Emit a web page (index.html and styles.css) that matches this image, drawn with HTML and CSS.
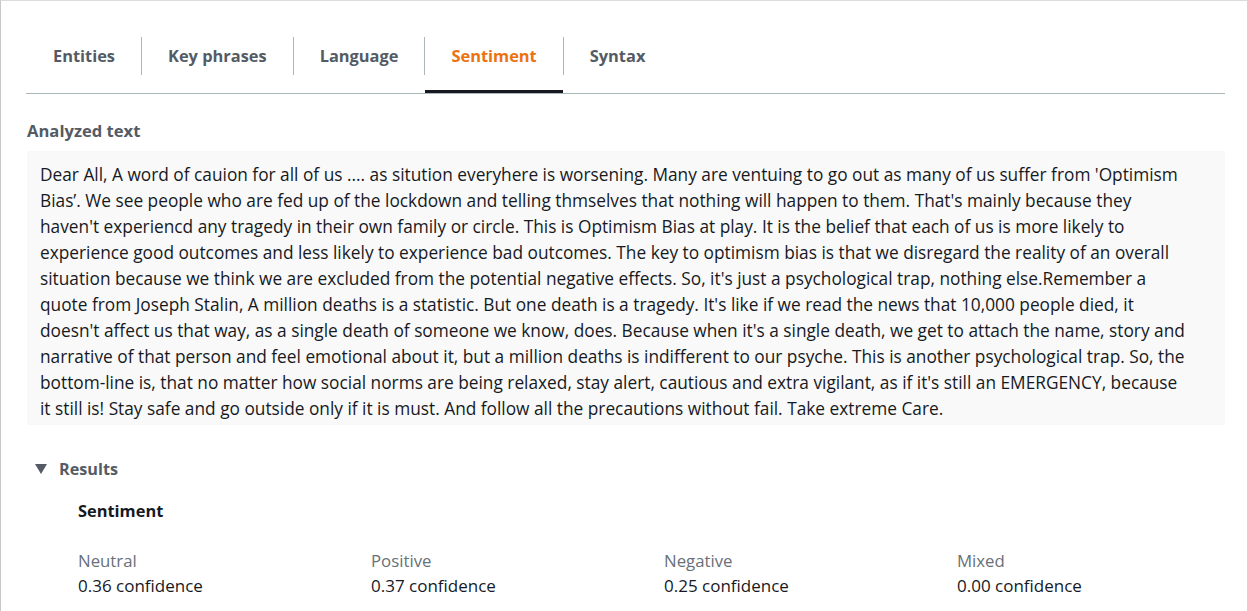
FILE: index.html
```html
<!DOCTYPE html>
<html lang="en">
<head>
<meta charset="utf-8">
<title>Sentiment</title>
<link rel="stylesheet" href="styles.css">
</head>
<body>
<div class="page">
  <ul class="tabs">
    <li class="tab"><a class="tab-link first">Entities</a></li>
    <li class="tab"><a class="tab-link">Key phrases</a></li>
    <li class="tab"><a class="tab-link">Language</a></li>
    <li class="tab active"><a class="tab-link">Sentiment</a></li>
    <li class="tab"><a class="tab-link">Syntax</a></li>
  </ul>

  <h3 class="label-heading">Analyzed text</h3>
  <div class="analyzed">Dear All, A word of cauion for all of us .... as sitution everyhere is worsening. Many are ventuing to go out as many of us suffer from 'Optimism<br>Bias’. We see people who are fed up of the lockdown and telling thmselves that nothing will happen to them. That's mainly because they<br>haven't experiencd any tragedy in their own family or circle. This is Optimism Bias at play. It is the belief that each of us is more likely to<br>experience good outcomes and less likely to experience bad outcomes. The key to optimism bias is that we disregard the reality of an overall<br>situation because we think we are excluded from the potential negative effects. So, it's just a psychological trap, nothing else.Remember a<br>quote from Joseph Stalin, A million deaths is a statistic. But one death is a tragedy. It's like if we read the news that 10,000 people died, it<br>doesn't affect us that way, as a single death of someone we know, does. Because when it's a single death, we get to attach the name, story and<br>narrative of that person and feel emotional about it, but a million deaths is indifferent to our psyche. This is another psychological trap. So, the<br>bottom-line is, that no matter how social norms are being relaxed, stay alert, cautious and extra vigilant, as if it's still an EMERGENCY, because<br>it still is! Stay safe and go outside only if it is must. And follow all the precautions without fail. Take extreme Care.</div>

  <div class="results">
    <div class="results-head">
      <svg class="caret" width="12" height="10" viewBox="0 0 12 10"><polygon points="0,0 12,0 6,10" fill="#545b64"/></svg>
      <span>Results</span>
    </div>
    <div class="results-body">
      <h4 class="sent-title">Sentiment</h4>
      <div class="scores">
        <div class="score"><div class="score-label">Neutral</div><div class="score-value">0.36 confidence</div></div>
        <div class="score"><div class="score-label">Positive</div><div class="score-value">0.37 confidence</div></div>
        <div class="score"><div class="score-label">Negative</div><div class="score-value">0.25 confidence</div></div>
        <div class="score"><div class="score-label">Mixed</div><div class="score-value">0.00 confidence</div></div>
      </div>
    </div>
  </div>
</div>
</body>
</html>
```

FILE: styles.css
```css
html, body {
  margin: 0;
  padding: 0;
  background: #ffffff;
}
body {
  font-family: "Open Sans", "Noto Sans", sans-serif;
  color: #16191f;
  overflow: hidden;
}
.page {
  box-sizing: border-box;
  height: 100vh;
  border-top: 1px solid #dcdcdc;
  border-left: 1px solid #c8c8c8;
  padding: 0 22px 0 25px;
}
.tabs {
  list-style: none;
  margin: 30px 0 0 0;
  padding: 0;
  display: flex;
  border-bottom: 1px solid #aab7b8;
}
.tab {
  position: relative;
  padding: 7px 0 17px;
}
.tab-link {
  display: block;
  padding: 0 26px;
  line-height: 38px;
  border-left: 1px solid #aab7b8;
  font-weight: 700;
  font-size: 16.4px;
  color: #545b64;
  position: relative;
  top: -1px;
}
.tab-link.first {
  border-left: none;
  padding-left: 27px;
}
.tab.active .tab-link {
  color: #ec7211;
}
.tab.active::after {
  content: "";
  position: absolute;
  left: 1px;
  right: 0;
  bottom: 0;
  height: 3px;
  background: #16191f;
}
.label-heading {
  margin: 27px 0 10px 1px;
  font-size: 16.6px;
  line-height: 20px;
  font-weight: 700;
  color: #545b64;
}
.analyzed {
  background: #f9f9f9;
  margin-left: 1px;
  padding: 11px 8px 3px 13px;
  font-size: 17.3px;
  line-height: 26px;
  color: #16191f;
  white-space: nowrap;
  overflow: hidden;
}
.results {
  margin-top: 34px;
}
.results-head {
  display: flex;
  align-items: center;
  gap: 12px;
  padding-left: 9px;
  font-size: 16.2px;
  line-height: 20px;
  font-weight: 700;
  color: #545b64;
}
.results-body {
  padding-left: 52px;
}
.sent-title {
  margin: 22px 0 30px;
  font-size: 16.4px;
  line-height: 20px;
  font-weight: 700;
  color: #16191f;
}
.scores {
  display: grid;
  grid-template-columns: repeat(4, 293px);
}
.score-label {
  font-size: 16.8px;
  line-height: 20px;
  color: #687078;
}
.score-value {
  margin-top: 5px;
  font-size: 17px;
  line-height: 20px;
  color: #16191f;
}
```
